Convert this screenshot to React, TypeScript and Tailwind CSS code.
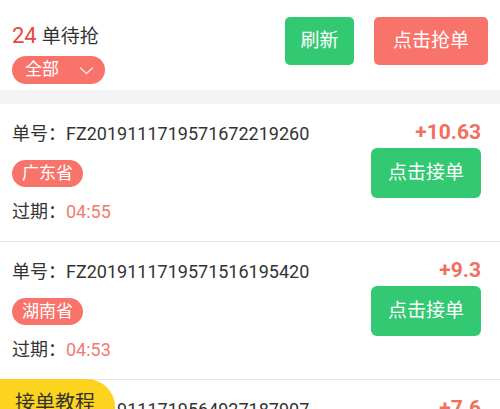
import React from "react";

type Order = {
    no: string;
    amount: string;
    province: string;
    expire: string;
};

const orders: Order[] = [
    { no: "FZ2019111719571672219260", amount: "+10.63", province: "广东省", expire: "04:55" },
    { no: "FZ2019111719571516195420", amount: "+9.3", province: "湖南省", expire: "04:53" },
    { no: "FZ2019111719564927187907", amount: "+7.6", province: "湖北省", expire: "04:50" },
];

function OrderCard({ order }: { order: Order }) {
    return (
        <div className="flex justify-between h-[138px] px-3 border-b border-[#e6e6e6] bg-white">
            <div className="flex flex-col items-start pt-[19px]">
                <p className="text-[18px] leading-[22px] text-[#333]">
                    单号：{order.no}
                </p>
                <span className="mt-[15px] h-[27px] px-[10px] rounded-full bg-[#f8736a] text-white text-[17px] leading-[27px]">
                    {order.province}
                </span>
                <p className="mt-[14px] text-[18px] leading-[22px] text-[#333]">
                    过期：<span className="text-[#f27a72]">{order.expire}</span>
                </p>
            </div>
            <div className="flex flex-col items-end pt-[16px] pr-[7px]">
                <span className="text-[21px] leading-[24px] font-bold text-[#f0705f]">
                    {order.amount}
                </span>
                <button className="mt-[4px] w-[110px] h-[50px] rounded-[6px] bg-[#33c872] text-white text-[19px]">
                    点击接单
                </button>
            </div>
        </div>
    );
}

export default function App() {
    return (
        <div
            className="relative w-[500px] h-[409px] overflow-hidden bg-white"
            style={{ fontFamily: 'Roboto, "Noto Sans CJK SC", sans-serif' }}
        >
            <div className="flex justify-between h-[90px] px-3">
                <div className="flex flex-col items-start pt-[22px]">
                    <p className="leading-[28px] text-[#333]">
                        <span className="text-[22px] text-[#e8463c]">24</span>
                        <span className="ml-[5px] text-[19px]">单待抢</span>
                    </p>
                    <button className="mt-1 flex items-center w-[93px] h-[28px] pl-[13px] rounded-full bg-[#f8736a] text-white text-[17px]">
                        全部
                        <svg className="ml-[20px]" width="15" height="9" viewBox="0 0 15 9" fill="none">
                            <path d="M1 1.5 L7.5 7.5 L14 1.5" stroke="#ffe3df" strokeWidth="1.3" />
                        </svg>
                    </button>
                </div>
                <div className="flex gap-[20px] pt-[17px]">
                    <button className="w-[69px] h-[48px] rounded-[5px] bg-[#33c872] text-white text-[19px]">
                        刷新
                    </button>
                    <button className="w-[114px] h-[48px] rounded-[5px] bg-[#f8736a] text-white text-[19px]">
                        点击抢单
                    </button>
                </div>
            </div>
            <div className="h-[14px] bg-[#f4f4f4]" />
            {orders.map((order) => (
                <OrderCard key={order.no} order={order} />
            ))}
            <div className="absolute left-0 top-[379px] w-[115px] h-[50px] pl-[15px] pt-[11px] rounded-tr-[28px] bg-[#fcd31d] text-[20px] leading-[26px] text-[#333]">
                接单教程
            </div>
        </div>
    );
}
